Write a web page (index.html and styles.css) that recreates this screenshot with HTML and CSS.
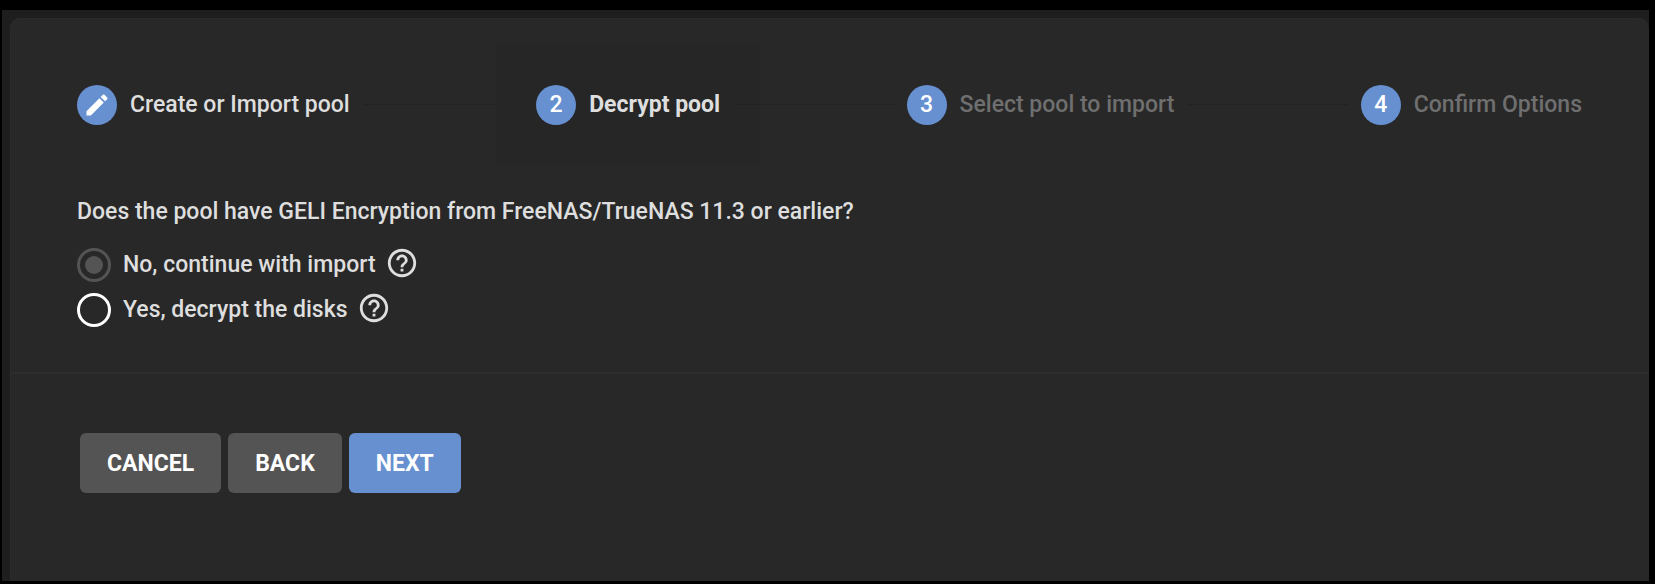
FILE: index.html
```
<!DOCTYPE html>
<html lang="en">
<head>
    <meta charset="UTF-8">
    <meta name="viewport" content="width=device-width, initial-scale=1.0">
    <title>Import Pool</title>
    <link rel="stylesheet" href="styles.css">
</head>
<body>
    <div class="page">
        <main class="card">
            <form class="wizard">
                <ol class="stepper">
                    <li class="step done">
                        <span class="step-icon">
                            <svg viewBox="0 0 24 24" width="28" height="28" aria-hidden="true"><path d="M3 17.25V21h3.75L17.81 9.94l-3.75-3.75L3 17.25zM20.71 7.04c.39-.39.39-1.02 0-1.41l-2.34-2.34c-.39-.39-1.02-.39-1.41 0l-1.83 1.83 3.75 3.75 1.83-1.83z"/></svg>
                        </span>
                        <span class="step-label">Create or Import pool</span>
                    </li>
                    <li class="step-line" role="presentation"></li>
                    <li class="step active" aria-current="step">
                        <span class="step-icon">2</span>
                        <span class="step-label">Decrypt pool</span>
                    </li>
                    <li class="step-line" role="presentation"></li>
                    <li class="step">
                        <span class="step-icon">3</span>
                        <span class="step-label">Select pool to import</span>
                    </li>
                    <li class="step-line" role="presentation"></li>
                    <li class="step">
                        <span class="step-icon">4</span>
                        <span class="step-label">Confirm Options</span>
                    </li>
                </ol>

                <fieldset class="question">
                    <legend>Does the pool have GELI Encryption from FreeNAS/TrueNAS 11.3 or earlier?</legend>
                    <div class="option">
                        <input type="radio" id="encryptedNo" name="encrypted" value="no" checked>
                        <label for="encryptedNo">No, continue with import</label>
                        <svg class="help" viewBox="0 0 24 24" width="34" height="34" aria-hidden="true"><path d="M11 18h2v-2h-2v2zm1-16C6.480 2 2 6.480 2 12s4.480 10 10 10 10-4.480 10-10S17.520 2 12 2zm0 18c-4.410 0-8-3.590-8-8s3.590-8 8-8 8 3.590 8 8-3.590 8-8 8zm0-14c-2.210 0-4 1.790-4 4h2c0-1.100.9-2 2-2s2 .9 2 2c0 2-3 1.750-3 5h2c0-2.250 3-2.500 3-5 0-2.210-1.790-4-4-4z"/></svg>
                    </div>
                    <div class="option">
                        <input type="radio" id="encryptedYes" name="encrypted" value="yes">
                        <label for="encryptedYes">Yes, decrypt the disks</label>
                        <svg class="help" viewBox="0 0 24 24" width="34" height="34" aria-hidden="true"><path d="M11 18h2v-2h-2v2zm1-16C6.480 2 2 6.480 2 12s4.480 10 10 10 10-4.480 10-10S17.520 2 12 2zm0 18c-4.410 0-8-3.590-8-8s3.590-8 8-8 8 3.590 8 8-3.590 8-8 8zm0-14c-2.210 0-4 1.790-4 4h2c0-1.100.9-2 2-2s2 .9 2 2c0 2-3 1.750-3 5h2c0-2.250 3-2.500 3-5 0-2.210-1.790-4-4-4z"/></svg>
                    </div>
                </fieldset>

                <div class="actions">
                    <button type="button">CANCEL</button>
                    <button type="button">BACK</button>
                    <button type="submit" class="primary">NEXT</button>
                </div>
            </form>
        </main>
    </div>
</body>
</html>
```
FILE: styles.css
```
:root {
    --primary-color: #6690d0;
    --button-color: #545454;
    --page-color: #1e1e1e;
    --card-color: #282828;
    --text-color: #dedede;
    --muted-color: #6f6f6f;
    --line-color: #222;
}

* {
    box-sizing: border-box;
    margin: 0;
    padding: 0;
}

body {
    min-height: 100vh;
    display: flex;
    padding: 10px 6px 3px 2px;
    background-color: #000;
    color: var(--text-color);
    font-family: Roboto, sans-serif;
    font-size: 23px;
    font-weight: 500;
    line-height: 32px;
}

.page {
    flex: 1;
    display: flex;
    padding: 8px 0 0 8px;
    background-color: var(--page-color);
}

.card {
    flex: 1;
    background-color: var(--card-color);
    border-radius: 10px 10px 0 0;
    box-shadow: inset 1px 1px 0 #2b2b2b;
}

/* Stepper */
.stepper {
    display: flex;
    align-items: center;
    padding: 26px 27px 0;
    list-style: none;
}

.step {
    display: flex;
    align-items: center;
    gap: 13px;
    height: 121px;
    padding: 0 40px;
    color: var(--muted-color);
    white-space: nowrap;
}

.step.done {
    color: var(--text-color);
}

.step.active {
    background-color: #262626;
    color: var(--text-color);
    font-weight: 700;
}

.step-icon {
    display: flex;
    align-items: center;
    justify-content: center;
    width: 40px;
    height: 40px;
    border-radius: 50%;
    background-color: var(--primary-color);
    color: #fff;
    font-weight: 500;
}

.step-icon svg {
    fill: #fff;
}

.step-line {
    flex: 1;
    height: 1px;
    margin: 0 -27px;
    background-color: var(--line-color);
}

/* Question */
.question {
    padding: 0 67px 40px;
    border: none;
    border-bottom: 2px solid #2d2d2d;
}

.question legend {
    padding: 31px 0 14px;
}

.option {
    display: flex;
    align-items: center;
    height: 45px;
}

.option input {
    appearance: none;
    display: grid;
    place-content: center;
    width: 34px;
    height: 34px;
    margin-right: 12px;
    border: 3px solid #fff;
    border-radius: 50%;
    cursor: pointer;
}

.option input:checked {
    border-color: var(--button-color);
}

.option input:checked::before {
    content: "";
    width: 18px;
    height: 18px;
    border-radius: 50%;
    background-color: var(--button-color);
}

.help {
    margin: 0 0 4px 9px;
    fill: var(--text-color);
}

/* Buttons */
.actions {
    display: flex;
    gap: 7px;
    padding: 59px 70px;
}

button {
    height: 60px;
    padding: 0 27px;
    border: none;
    border-radius: 6px;
    background-color: var(--button-color);
    color: #fff;
    font-family: inherit;
    font-size: 23px;
    font-weight: 700;
    cursor: pointer;
}

button.primary {
    background-color: var(--primary-color);
}
```
